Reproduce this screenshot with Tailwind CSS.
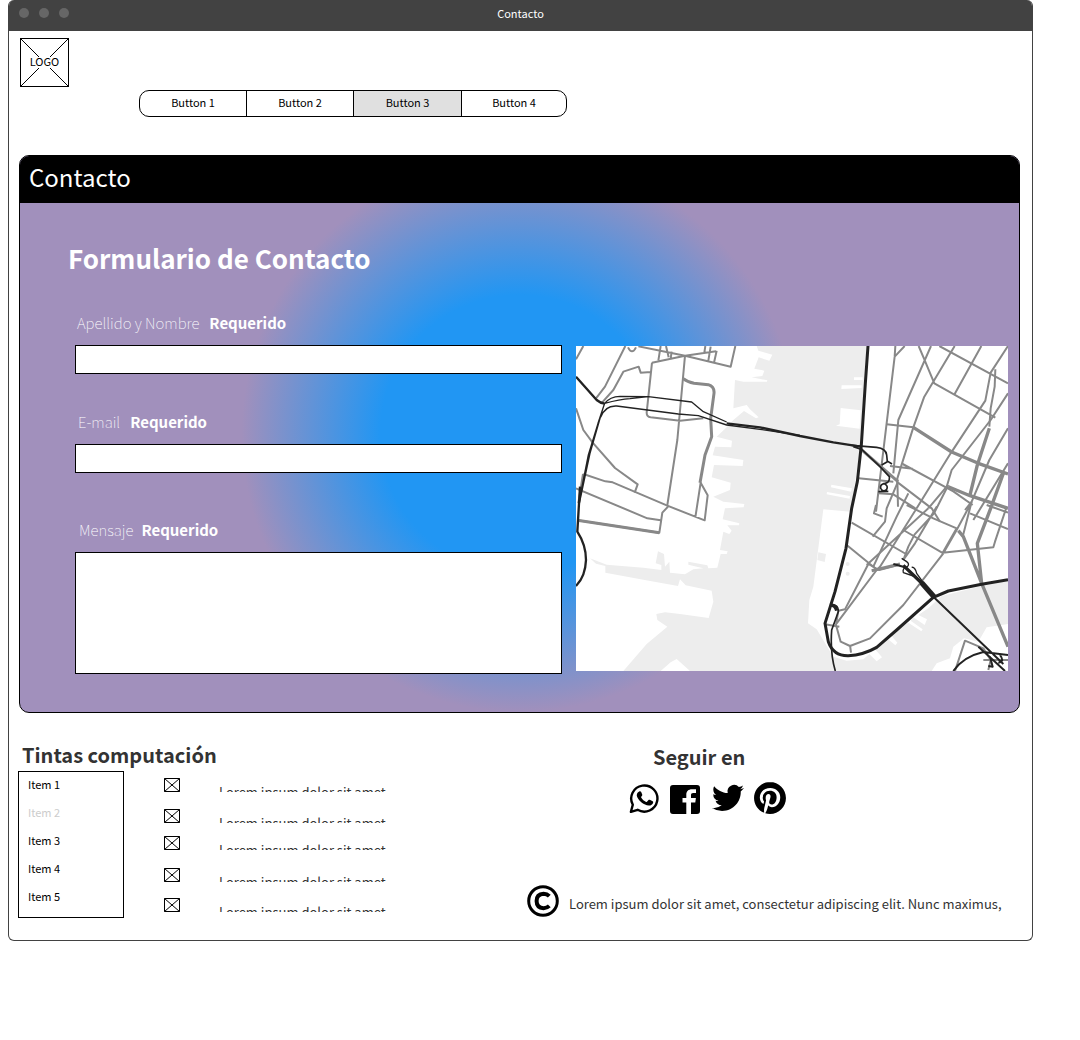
<!DOCTYPE html>
<html lang="es">
<head>
<meta charset="utf-8">
<meta name="viewport" content="width=device-width, initial-scale=1">
<title>Contacto</title>
<script src="https://cdn.jsdelivr.net/npm/@tailwindcss/browser@4"></script>
</head>
<body class="bg-white font-['Noto_Sans_CJK_SC','Noto_Sans',sans-serif] text-black">
<div class="ml-2 mr-[47px] overflow-hidden rounded-md border border-t-0 border-[#424242]">

  <!-- Title bar -->
  <header class="relative flex h-[31px] items-center justify-center bg-[#424242] pb-1 text-[11px] text-white">
    <div class="absolute left-2.5 top-2 flex gap-2.5" aria-hidden="true">
      <span class="size-2.5 rounded-full bg-[#666]"></span>
      <span class="size-2.5 rounded-full bg-[#666]"></span>
      <span class="size-2.5 rounded-full bg-[#666]"></span>
    </div>
    <span>Contacto</span>
  </header>

  <div class="pt-[7px]">
    <div class="relative ml-[11px] flex size-[49px] items-center justify-center border border-black pb-1">
      <svg class="absolute inset-0 size-full" viewBox="0 0 47 47" fill="none" stroke="#000" aria-hidden="true"><path d="M0 0 18 18M29 18 47 0M0 47 18 29M29 29 47 47"/></svg>
      <span class="relative text-[11px] leading-4">LOGO</span>
    </div>

    <nav class="ml-[130px] mt-[3px] grid h-[27px] w-[428px] grid-cols-[107fr_107fr_108fr_104fr] divide-x divide-black overflow-hidden rounded-[10px] border border-black text-[11px]">
      <button type="button" class="pb-0.5">Button 1</button>
      <button type="button" class="pb-0.5">Button 2</button>
      <button type="button" class="bg-[#e0e0e0] pb-0.5">Button 3</button>
      <button type="button" class="pb-0.5">Button 4</button>
    </nav>
  </div>

  <!-- Contact panel -->
  <main class="ml-2.5 mr-3 mt-[38px] overflow-hidden rounded-[10px] border border-black bg-[radial-gradient(circle_closest-side,#2196f3_50%,#a190bc_100%)]">
    <h1 class="flex h-[47px] items-center bg-black pb-1.5 pl-[9px] text-2xl leading-8 text-white">Contacto</h1>
    <div class="pb-[38px] pl-[55px] pr-[11px] pt-9">
      <h2 class="-ml-[7px] h-10 text-[26px] font-bold leading-[38px] text-white">Formulario de Contacto</h2>
      <div class="mt-[33px] grid grid-cols-[487fr_432fr] items-start gap-[14px]">
        <form>
          <div>
            <label for="nombre" class="flex h-6 gap-2.5 pl-0.5 text-[15px] leading-[22px] text-white"><span class="font-thin">Apellido y Nombre</span><span class="font-bold">Requerido</span></label>
            <input id="nombre" type="text" required class="mt-[9px] block h-[29px] w-full border border-black bg-white px-2 text-sm shadow-none">
          </div>
          <div class="mt-[37px]">
            <label for="email" class="flex h-6 gap-2.5 pl-[3px] text-[15px] leading-[22px] text-white"><span class="font-thin">E-mail</span><span class="font-bold">Requerido</span></label>
            <input id="email" type="email" required class="mt-[9px] block h-[29px] w-full border border-black bg-white px-2 text-sm shadow-none">
          </div>
          <div class="mt-[46px]">
            <label for="mensaje" class="flex h-6 gap-2 pl-1 text-[15px] leading-[22px] text-white"><span class="font-thin">Mensaje</span><span class="font-bold">Requerido</span></label>
            <textarea id="mensaje" required class="mt-[9px] block h-[122px] w-full resize-none border border-black bg-white p-2 text-sm shadow-none"></textarea>
          </div>
        </form>

        <svg class="mt-[34px] h-[325px] w-full bg-white" viewBox="18 18 1296 975" preserveAspectRatio="xMidYMid slice" fill="none" stroke-linejoin="round" role="img" aria-label="Mapa">
          <!-- water -->
          <path fill="#ededed" d="M560 18 565 32 607 44 598 62 566 52 553 86 583 92 577 108 545 112 592 121 591 125 520 125 495 120 490 205 530 195 540 208 566 232 558 235 522 213 490 240 470 262 440 290 486 302 484 322 435 320 428 346 520 360 518 378 432 375 425 412 482 428 480 450 430 470 460 485 523 492 521 502 465 505 458 538 508 550 507 556 472 556 485 572 478 582 460 575 450 630 473 634 470 642 452 642 442 683 415 685 412 676 355 665 355 674 400 685 370 688 345 703 300 698 298 665 285 680 282 642 264 634 257 670 274 675 274 690 220 683 110 674 60 655 78 671 106 678 106 698 220 719 324 738 330 718 347 736 425 752 430 785 416 834 330 822 285 817 259 822 262 840 292 860 230 912 160 993H272L302 967 320 957 360 993H1085L1100 970 1140 955 1150 920 1182 895 1225 905 1250 862 1314 852V722L1220 742 1115 768 1075 805 1045 825 1071 838 1064 855 1030 832 1022 842 1058 868 1054 874 1015 848 960 882 982 908 976 916 950 894 912 924 936 952 920 964 898 942 880 958 830 962 790 950 740 868 714 850 718 780 730 740 760 508 842 515 870 330 890 18Z"/>
          <path fill="#fff" d="M812 204 872 211 869 266 798 257 809 253ZM815 136H875V144L814 147ZM852 112H878V120H852ZM784 434 846 445 843 455 783 442ZM771 456 840 468 839 476 770 463Z"/>
          <path fill="#ededed" d="M745 637 768 642 764 666 742 660Z"/>
          <g fill="#ededed"><circle cx="833" cy="672" r="6"/><circle cx="833" cy="701" r="6"/></g>

          <!-- streets, west side -->
          <g stroke="#888" stroke-width="6">
            <path d="M40 18 18 58M166 18 105 140 78 175M174 22Q186 46 198 22M205 19 345 47 482 80 496 18M272 18 265 62M288 18 296 52M305 35 302 55M406 18 403 38M422 20 415 62M440 32 432 68M246 68 345 47 438 34"/>
            <path d="M246 68 230 218Q230 230 242 232L330 242 400 235M345 47 322 300 292 495M96 188 130 150 160 95 206 80 212 98 242 96M18 205 40 270 68 308 135 384 203 433 194 458"/>
            <path d="M40 402 106 424 128 427 292 497 404 541 413 466 392 428 376 532M18 445 232 535 272 541M22 541 268 578 277 518 294 500"/>
            <path stroke-width="9" d="M340 116Q352 126 372 130L415 134Q434 140 432 160L422 235 425 290 405 345 390 428M22 541 268 578" />
            <path stroke-width="8" d="M40 402 26 490"/>
          </g>
          <!-- streets, east side -->
          <g stroke="#888" stroke-width="6">
            <path d="M976 18 974 50 918 515M974 50 1004 18M1083 18 985 240 970 400M1046 18 1062 56 1093 130 1276 233M1154 18 1062 172 1030 262 982 415 984 500M1234 18 1154 162M1108 18 1314 130M1314 18 1262 98 1246 182 1142 340 1040 505M1276 88 1274 140 1262 205 1258 260"/>
            <path d="M950 253 1030 262M1314 160 1262 240 1145 390 1130 440 1075 505M1314 265 1258 360 1205 485 1185 510M1314 370 1210 540M866 415 970 425M960 378 1028 386M998 372 1150 454 1208 495M925 460 970 463 1036 505M1015 460 980 530 910 680"/>
            <path d="M984 425 950 505 945 545 908 590M918 495 912 520 938 530M980 425 1085 505 1110 545"/>
            <path d="M1075 505 890 675M1040 505 930 680 920 690 800 850M1100 500 1035 610 1000 660M1135 435 1092 520 1034 583 1015 620 1000 660M1010 495 1090 535 1160 565M1200 495 1160 570 1120 640M845 548 1008 642M830 615 922 690M1000 570 1120 640M1160 565 1118 638 1270 622 1275 605 1310 500M1200 520 1314 567M1250 495 1314 518M1205 485 1178 590"/>
            <path d="M895 672 927 690 985 675M895 672 825 808 805 812 798 855 812 905 840 918 900 895 1000 795 1120 640M840 915 843 938M765 853 808 860M1155 993 1185 902 1240 925 1262 960 1255 990M1240 960H1314"/>
            <path stroke-width="10" d="M1030 262 1145 336 1225 370 1314 402M1258 265 1222 375 1200 465M1300 400 1262 505 1222 610 1235 730M1165 572 1180 590 1235 730 1314 920M1135 440 1200 467 1314 505"/>
            <path stroke-width="9" d="M870 325 984 425M905 692 990 672"/>
          </g>

          <!-- railways and motorways -->
          <g stroke="#222">
            <path stroke-width="9" d="M894 18 886 130 874 315 862 425 845 505 828 625 795 755 765 850 775 905Q790 948 835 947 880 945 920 922L980 870 1090 772 1135 753 1235 733 1314 719"/>
            <path stroke-width="7" d="M18 110 80 180Q92 190 104 191M470 250 570 262 690 288 790 307 872 320"/>
            <path stroke-width="4" d="M104 190Q120 170 150 169L235 170 365 186 400 215 470 246M104 190Q150 178 180 176L235 170M92 232Q105 196 140 198L325 222 385 227 470 255 570 268 690 286M104 190 84 250 55 345 30 470M96 215 60 340 45 410 26 500"/>
            <path stroke-width="7" d="M30 440 22 575Q48 615 48 660 46 710 18 738" />
            <path stroke-width="5" d="M845 316 920 322Q948 325 950 345L952 365 935 375M950 362 966 372M850 320 875 328 930 380 958 410Q960 428 945 430 930 432 932 445 940 458 950 448 956 436 940 430M925 455 955 454M780 795Q805 790 805 815L785 870Q780 940 796 993"/>
            <path stroke-width="6" d="M970 672 1005 682 1060 735 1090 770 1300 972M1150 993Q1180 950 1240 936L1314 945M1225 920Q1270 960 1305 993M1260 950 1268 980 1255 978M1290 945Q1305 965 1285 968"/>
            <path stroke-width="16" d="M1055 728 1092 770"/>
            <path stroke-width="10" d="M1000 676 1058 732M780 795Q796 794 800 812"/>
            <path stroke-width="4" d="M995 655 1010 665Q1020 672 1012 680 996 684 1000 698L1030 708M1025 682Q1035 680 1040 700L1060 728"/>
          </g>
        </svg>
      </div>
    </div>
  </main>

  <!-- Footer -->
  <footer class="grid grid-cols-[509fr_505fr] pb-[22px] pl-[9px] pt-7">
    <section>
      <h3 class="h-[30px] pl-1 text-xl font-bold leading-7 text-[#333]">Tintas computación</h3>
      <div class="flex items-start">
        <ul class="h-[147px] w-[106px] border border-black pl-[9px] text-[11px] leading-6">
          <li class="h-7">Item 1</li>
          <li class="h-7 text-[#ccc]">Item 2</li>
          <li class="h-7">Item 3</li>
          <li class="h-7">Item 4</li>
          <li class="h-7">Item 5</li>
        </ul>
        <ul class="ml-10 mt-[7px] grid grid-rows-[31px_27px_32px_30px_14px] text-[13px] text-[#333]">
          <li class="flex h-3.5 gap-[39px] overflow-hidden"><svg class="h-3.5 w-4" viewBox="0 0 16 14" fill="none" stroke="#000" aria-hidden="true"><path d="M.5.5h15v13H.5zM.5.5l15 13M15.5.5l-15 13"/></svg><span class="leading-7">Lorem ipsum dolor sit amet</span></li>
          <li class="flex h-3.5 gap-[39px] overflow-hidden"><svg class="h-3.5 w-4" viewBox="0 0 16 14" fill="none" stroke="#000" aria-hidden="true"><path d="M.5.5h15v13H.5zM.5.5l15 13M15.5.5l-15 13"/></svg><span class="leading-7">Lorem ipsum dolor sit amet</span></li>
          <li class="flex h-3.5 gap-[39px] overflow-hidden"><svg class="h-3.5 w-4" viewBox="0 0 16 14" fill="none" stroke="#000" aria-hidden="true"><path d="M.5.5h15v13H.5zM.5.5l15 13M15.5.5l-15 13"/></svg><span class="leading-7">Lorem ipsum dolor sit amet</span></li>
          <li class="flex h-3.5 gap-[39px] overflow-hidden"><svg class="h-3.5 w-4" viewBox="0 0 16 14" fill="none" stroke="#000" aria-hidden="true"><path d="M.5.5h15v13H.5zM.5.5l15 13M15.5.5l-15 13"/></svg><span class="leading-7">Lorem ipsum dolor sit amet</span></li>
          <li class="flex h-3.5 gap-[39px] overflow-hidden"><svg class="h-3.5 w-4" viewBox="0 0 16 14" fill="none" stroke="#000" aria-hidden="true"><path d="M.5.5h15v13H.5zM.5.5l15 13M15.5.5l-15 13"/></svg><span class="leading-7">Lorem ipsum dolor sit amet</span></li>
        </ul>
      </div>
    </section>

    <section class="pt-0.5">
      <h3 class="h-[30px] pl-[126px] text-xl font-bold leading-7 text-[#333]">Seguir en</h3>
      <div class="mt-[9px] flex gap-[10px] pl-[101px]">
        <a href="#whatsapp" aria-label="WhatsApp"><svg class="size-8" viewBox="0 0 32 32" aria-hidden="true"><path fill="none" stroke="#000" stroke-width="2.4" stroke-linejoin="round" d="M2.900 29.800 4.800 22.800A13.100 13.100 0 1 1 9.600 27.800Z"/><path d="M11.200 9.400c.900-.500 1.600-.200 2 .700l1 2.400c.300.800-.100 1.300-.800 2.100-.400.400-.400.700-.100 1.200 1.200 1.900 2.700 3.200 4.800 4.100.500.200.800.100 1.100-.300l1.300-1.500c.400-.500.800-.500 1.300-.300l2.800 1.400c.600.300.700.700.500 1.500-.500 2-2.400 2.900-4.300 2.800-5.200-.400-9.400-4.200-11.500-8.200-1.200-2.200-.400-4.700 1.900-5.900Z"/></svg></a>
        <a href="#facebook" aria-label="Facebook"><svg class="size-8" viewBox="0 0 32 32" aria-hidden="true"><path d="M3 3h24a3 3 0 0 1 3 3v23a3 3 0 0 1-3 3h-6V20.500h4.300l.6-4.500H21v-2.800c0-1.400.6-2.200 2.200-2.200H26V7.200h-4c-3.700 0-5.700 2.200-5.700 5.500V16h-3.800v4.500h3.800V32H3a3 3 0 0 1-3-3V6a3 3 0 0 1 3-3Z"/></svg></a>
        <a href="#twitter" aria-label="Twitter"><svg class="size-8" viewBox="0 0 24 24" aria-hidden="true"><path d="M23.953 4.570a10 10 0 0 1-2.825.775 4.958 4.958 0 0 0 2.163-2.723c-.951.555-2.005.959-3.127 1.184a4.920 4.920 0 0 0-8.384 4.482C7.690 8.095 4.067 6.130 1.640 3.162a4.822 4.822 0 0 0-.666 2.475c0 1.710.870 3.213 2.188 4.096a4.904 4.904 0 0 1-2.228-.616v.060a4.923 4.923 0 0 0 3.946 4.827 4.996 4.996 0 0 1-2.212.085 4.936 4.936 0 0 0 4.604 3.417 9.867 9.867 0 0 1-6.102 2.105c-.390 0-.779-.023-1.170-.067a13.995 13.995 0 0 0 7.557 2.209c9.053 0 13.998-7.496 13.998-13.985 0-.210 0-.420-.015-.630A9.935 9.935 0 0 0 24 4.590z"/></svg></a>
        <a href="#pinterest" aria-label="Pinterest"><svg class="size-8" viewBox="0 0 24 24" aria-hidden="true"><path d="M12.017 0C5.396 0 .029 5.367.029 11.987c0 5.079 3.158 9.417 7.618 11.162-.105-.949-.199-2.403.041-3.439.219-.937 1.406-5.957 1.406-5.957s-.359-.720-.359-1.781c0-1.663.967-2.911 2.168-2.911 1.024 0 1.518.769 1.518 1.688 0 1.029-.653 2.567-.992 3.992-.285 1.193.600 2.165 1.775 2.165 2.128 0 3.768-2.245 3.768-5.487 0-2.861-2.063-4.869-5.008-4.869-3.410 0-5.409 2.562-5.409 5.199 0 1.033.394 2.143.889 2.741.099.120.112.225.085.345-.090.375-.293 1.199-.334 1.363-.053.225-.172.271-.401.165-1.495-.690-2.433-2.878-2.433-4.646 0-3.776 2.748-7.252 7.920-7.252 4.158 0 7.392 2.967 7.392 6.923 0 4.135-2.607 7.462-6.233 7.462-1.214 0-2.354-.629-2.758-1.379l-.749 2.848c-.269 1.045-1.004 2.352-1.498 3.146 1.123.345 2.306.535 3.550.535 6.607 0 11.985-5.365 11.985-11.987C23.970 5.390 18.592.026 11.985.026L12.017 0z"/></svg></a>
      </div>
      <div class="mt-[71px] flex items-center gap-2.5 text-[13px] text-[#333]">
        <svg class="size-8 shrink-0" viewBox="0 0 32 32" fill="none" stroke="#000" role="img" aria-label="Copyright"><circle cx="16" cy="16" r="14.300" stroke-width="3"/><path stroke-width="4" d="M22.300 11.100Q20 8.800 16.600 8.800 9.600 9.200 9.600 16T16.600 23.200Q20 23.200 22.300 20.900"/></svg>
        <p class="pt-1.5 leading-5">Lorem ipsum dolor sit amet, consectetur adipiscing elit. Nunc maximus,</p>
      </div>
    </section>
  </footer>
</div>
</body>
</html>
